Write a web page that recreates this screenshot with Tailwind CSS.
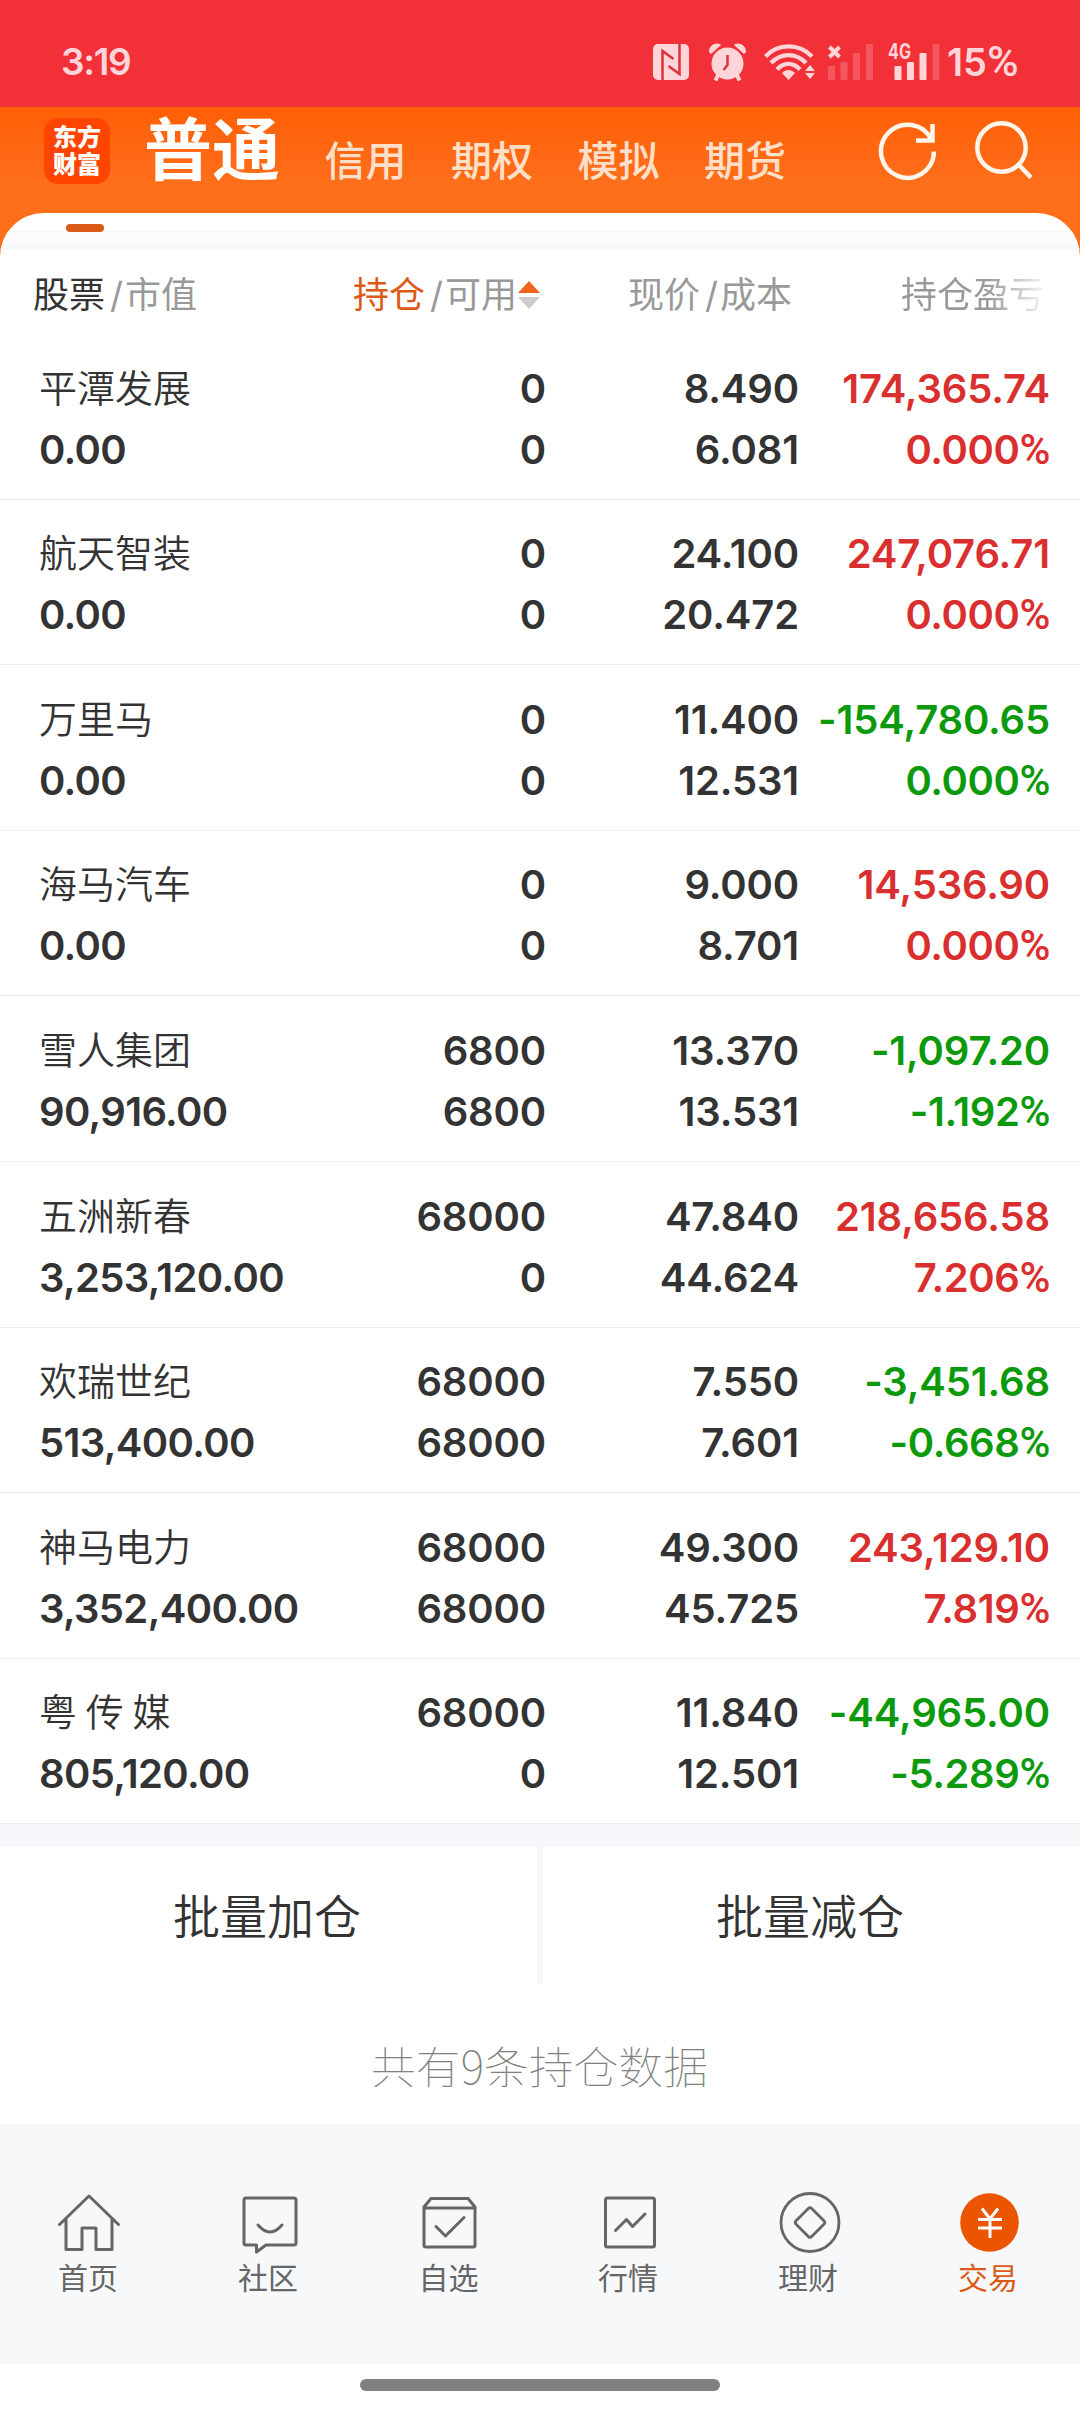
<!DOCTYPE html>
<html lang="zh-CN">
<head>
    <meta charset="UTF-8">
    <meta name="viewport" content="width=device-width, initial-scale=1.0">
    <title>交易 - 持仓</title>
    <script src="https://cdn.jsdelivr.net/npm/@tailwindcss/browser@4"></script>
</head>
<body class="bg-white font-['Inter','Noto_Sans_CJK_SC',sans-serif] text-[#333]">
<div class="w-[1080px] h-[2412px] flex flex-col overflow-hidden">

    <!-- Status bar -->
    <div class="h-[107px] shrink-0 bg-[#f23038] text-[#ffd5d9] flex items-center pt-4 pl-[61px] pr-[61px]">
        <span class="text-[37px] font-semibold leading-none tracking-[-1.300px]">3:19</span>
        <div class="ml-auto flex items-center">
            <!-- NFC -->
            <svg class="w-9 h-9 mr-5" viewBox="0 0 36 36">
                <rect width="36" height="36" rx="5" fill="#ffd5d9"/>
                <path d="M9.500 36V7l11 8M26.500 0v30l-11-8" fill="none" stroke="#e0303a" stroke-width="2.500"/>
            </svg>
            <!-- Alarm -->
            <svg class="w-[37px] h-[38px] mr-[18px]" viewBox="0 0 37 38" fill="#ffd5d9">
                <circle cx="18.500" cy="20.500" r="16"/>
                <path d="M0 9C0 3 5 -1 11 1L12 2 2 11ZM37 9C37 3 32 -1 26 1L25 2 35 11Z"/>
                <path d="M9 32l-2.500 5.500M28 32l2.500 5.500" stroke="#ffd5d9" stroke-width="4"/>
                <path d="M18.500 12v10l-4 5" fill="none" stroke="#e0303a" stroke-width="2.500"/>
            </svg>
            <!-- Wifi -->
            <svg class="w-[51px] h-9 mr-[13px]" viewBox="0 0 51 36" fill="none" stroke="#ffd5d9" stroke-width="4.300">
                <path d="M1.500 12.500C14-1 35-1 48 12.500M7 19C17 8.500 32 8.500 42 19M13 25.500C20 18 29 18 36 25.500"/>
                <path d="M18 29c4-4 9-4 13 0l-6.500 7z" fill="#ffd5d9" stroke="none"/>
                <path d="M46 21l5 6H41zM46 35l5-6H41z" fill="#ffd5d9" stroke="none"/>
            </svg>
            <!-- SIM 1, no service -->
            <svg class="w-[46px] h-9 mr-[14px]" viewBox="0 0 46 36">
                <path d="M1.500 3l10 10M11.500 3l-10 10" stroke="#ffd5d9" stroke-width="4"/>
                <g fill="#f6565f"><rect y="22" width="7" height="14" rx="1"/><rect x="12.500" y="18" width="7" height="18" rx="1"/><rect x="25" y="9" width="7" height="27" rx="1"/><rect x="38" width="7" height="36" rx="1"/></g>
            </svg>
            <!-- SIM 2 -->
            <svg class="w-[52px] h-9 mr-[7px] overflow-visible" viewBox="0 0 52 36" fill="#ffd5d9">
                <text x="0" y="14.500" font-size="21" font-weight="700" textLength="23" lengthAdjust="spacingAndGlyphs">4G</text>
                <rect x="6.500" y="22" width="7" height="14" rx="1"/><rect x="19" y="18" width="7" height="18" rx="1"/><rect x="31.500" y="9" width="7" height="27" rx="1"/>
                <rect x="44.500" width="7" height="36" rx="1" fill="#f6565f"/>
            </svg>
            <span class="w-[72px] whitespace-nowrap text-[38px] font-semibold leading-none">15<span class="font-['Roboto'] font-medium text-[43px] leading-none">%</span></span>
        </div>
    </div>

    <!-- Header and sheet top -->
    <div class="h-[151px] shrink-0 bg-linear-to-b from-[#ff5f05] to-[#ff6e1a] to-50% flex flex-col">
        <header class="h-[106px] shrink-0 flex items-start text-white">
            <div class="w-[66px] h-[66px] mt-[11px] ml-11 rounded-[14px] bg-[#ff4500] flex flex-col items-center justify-center text-[24px] leading-[27.500px] font-black">
                <span>东方</span>
                <span>财富</span>
            </div>
            <h1 class="ml-[34px] mt-[9px] text-[68px] leading-[68px] font-bold">普通</h1>
            <nav class="flex gap-[44.500px] ml-[44.500px] mt-[34px] text-[41px] leading-[41px] font-medium text-[#ffdfc8]">
                <span>信用</span>
                <span>期权</span>
                <span>模拟</span>
                <span>期货</span>
            </nav>
            <svg class="w-[58px] h-[60px] mt-[14px] ml-auto" viewBox="0 0 58 60" fill="none" stroke="#fff5ea" stroke-width="4.500">
                <path d="M56 30.500A26.500 26.500 0 1 1 53.500 19"/>
                <path d="M54.500 3v16.500H38"/>
            </svg>
            <svg class="w-[58px] h-[58px] mt-[14px] ml-[39px] mr-[47px]" viewBox="0 0 58 58" fill="none" stroke="#fff5ea" stroke-width="4.500">
                <circle cx="26.500" cy="26.500" r="24.200"/>
                <path d="M43.500 43.500L56 56.500"/>
            </svg>
        </header>
        <div class="h-[45px] rounded-t-[44px] bg-white overflow-hidden flex flex-col">
            <div class="h-[19px] pt-[11px] pl-[66px] border-b border-[#f4f5f6]">
                <div class="w-[38px] h-2 rounded bg-[#db5a17]"></div>
            </div>
            <div class="h-[13px] bg-[#fcfcfd]"></div>
            <div class="h-[5px] bg-[#f6f8fb]"></div>
        </div>
    </div>

    <!-- Column titles -->
    <div class="h-[76px] shrink-0 flex items-start pt-[19px] pl-[33px] text-[36px] leading-[36px] text-[#999]">
        <div class="w-[320px] flex gap-[5px]"><span class="text-[#333]">股票</span><span class="w-[10px] text-center">/</span><span>市值</span></div>
        <div class="w-[275px] flex gap-[5px]"><span class="text-[#dc5a17]">持仓</span><span class="w-[10px] text-center">/</span><span>可用</span>
            <svg class="w-[22px] h-7 mt-1 -ml-[4px]" viewBox="0 0 22 28"><path d="M11 0l11 12H0z" fill="#f0641e"/><path d="M11 28l11-12H0z" fill="#ccc"/></svg>
        </div>
        <div class="w-[273px] flex gap-[5px]"><span>现价</span><span class="w-[10px] text-center">/</span><span>成本</span></div>
        <div class="bg-linear-to-r from-[#999] from-60% to-[#999]/10 bg-clip-text text-transparent">持仓盈亏</div>
    </div>

    <!-- Positions -->
    <div id="positions" class="shrink-0"></div>

    <div class="h-[22.600px] shrink-0 bg-[#f6f8fb]"></div>

    <!-- Batch actions -->
    <div class="h-[137px] shrink-0 flex text-[47px] leading-[47px] font-[350]">
        <div class="w-[537px] flex items-center justify-center pt-[2px] pr-[3px]">批量加仓</div>
        <div class="w-[6px] bg-[#f6f8fb]"></div>
        <div class="w-[537px] flex items-center justify-center pt-[2px] pr-[3px]">批量减仓</div>
    </div>
    <div class="h-[140px] shrink-0 flex items-center justify-center pt-[22px] pr-px font-['Noto_Sans_CJK_SC',sans-serif] font-thin text-[44.800px] leading-none text-[#808080]">共有9条持仓数据</div>

    <!-- Tab bar -->
    <nav class="h-[240px] shrink-0 bg-[#f7f8fa] grid grid-cols-6 pt-[66px] text-[30px] leading-[30px] text-[#666]">
        <div class="flex flex-col items-center gap-[9px]">
            <svg class="w-16 h-16 -ml-[2px]" viewBox="0 0 64 64" fill="none" stroke="#666" stroke-width="3" stroke-linecap="round" stroke-linejoin="round"><path d="M2.500 34.500L32 6l29.500 28.500M9 29v30.500h16V38h14v21.500h16V29"/></svg>
            <span class="-ml-[4px]">首页</span>
        </div>
        <div class="flex flex-col items-center gap-[9px]">
            <svg class="w-16 h-16 -ml-[1px]" viewBox="0 0 64 64" fill="none" stroke="#666" stroke-width="3" stroke-linecap="round" stroke-linejoin="round"><path d="M8 8h48q2 0 2 2v43q0 2-2 2H28l-9.500 7v-7H8q-2 0-2-2V10q0-2 2-2z"/><path d="M20 35q12 14 24 0"/></svg>
            <span class="-ml-[4px]">社区</span>
        </div>
        <div class="flex flex-col items-center gap-[9px]">
            <svg class="w-16 h-16" viewBox="0 0 64 64" fill="none" stroke="#666" stroke-width="3" stroke-linecap="round" stroke-linejoin="round"><path d="M6 17l7-8.500h37l7 8.500v38q0 2-2 2H8q-2 0-2-2zM6 18h51M18 36.500l9.500 9.500L46 27.500"/></svg>
            <span class="-ml-[3px]">自选</span>
        </div>
        <div class="flex flex-col items-center gap-[9px]">
            <svg class="w-16 h-16" viewBox="0 0 64 64" fill="none" stroke="#666" stroke-width="3" stroke-linecap="round" stroke-linejoin="round"><rect x="7.500" y="8" width="49" height="49" rx="2"/><path d="M17.500 40.500l11-11 6 7L47 24"/></svg>
            <span class="-ml-[4px]">行情</span>
        </div>
        <div class="flex flex-col items-center gap-[9px]">
            <svg class="w-16 h-16" viewBox="0 0 64 64" fill="none" stroke="#666" stroke-width="2.800" stroke-linejoin="round"><circle cx="32" cy="32.500" r="29"/><rect x="21" y="21.500" width="22" height="22" rx="2" transform="rotate(45 32 32.500)"/></svg>
            <span class="-ml-[4px]">理财</span>
        </div>
        <div class="flex flex-col items-center gap-[9px] text-[#dc5a17]">
            <svg class="w-16 h-16" viewBox="0 0 64 64" fill="none" stroke="#fff" stroke-width="3"><circle cx="31.500" cy="32.500" r="29.300" fill="#eb5500" stroke="none"/><path d="M24 18.500l8 10.500 8-10.500M32 29v19M20 29.500h24M20 38h24"/></svg>
            <span class="-ml-[4px]">交易</span>
        </div>
    </nav>

    <!-- Gesture bar -->
    <div class="flex justify-center pt-[15px]">
        <div class="w-[360px] h-3 rounded-full bg-[#808080]"></div>
    </div>
</div>

<script>
    // name, market value, held, available, price, cost, profit, profit %
    const positions = [
        ['平潭发展', '0.00', '0', '0', '8.490', '6.081', '174,365.74', '0.000', 'up'],
        ['航天智装', '0.00', '0', '0', '24.100', '20.472', '247,076.71', '0.000', 'up'],
        ['万里马', '0.00', '0', '0', '11.400', '12.531', '-154,780.65', '0.000', 'down'],
        ['海马汽车', '0.00', '0', '0', '9.000', '8.701', '14,536.90', '0.000', 'up'],
        ['雪人集团', '90,916.00', '6800', '6800', '13.370', '13.531', '-1,097.20', '-1.192', 'down'],
        ['五洲新春', '3,253,120.00', '68000', '0', '47.840', '44.624', '218,656.58', '7.206', 'up'],
        ['欢瑞世纪', '513,400.00', '68000', '68000', '7.550', '7.601', '-3,451.68', '-0.668', 'down'],
        ['神马电力', '3,352,400.00', '68000', '68000', '49.300', '45.725', '243,129.10', '7.819', 'up'],
        ['粤 传 媒', '805,120.00', '68000', '0', '11.840', '12.501', '-44,965.00', '-5.289', 'down']
    ];
    const colors = { up: 'text-[#d92f2f]', down: 'text-[#0c9a0c]' };

    document.getElementById('positions').innerHTML = positions.map(p => `
        <div class="h-[165.600px] border-b border-[#ededee] grid grid-cols-[290px_216px_253px_251px] pl-10 pt-[23.600px] text-[40px] leading-[61px] font-semibold tracking-[-0.150px]">
            <div class="-ml-px"><div class="text-[38px] font-[350] tracking-normal [word-spacing:-2px]">${p[0]}</div><div class="tracking-[-0.650px]">${p[1]}</div></div>
            <div class="text-right"><div>${p[2]}</div><div>${p[3]}</div></div>
            <div class="text-right"><div>${p[4]}</div><div>${p[5]}</div></div>
            <div class="text-right ${colors[p[8]]}"><div>${p[6]}</div><div class="h-[61px] tracking-[-0.400px]">${p[7]}<span class="font-['Roboto'] font-medium text-[42px] leading-none">%</span></div></div>
        </div>
    `).join('');
</script>
</body>
</html>
